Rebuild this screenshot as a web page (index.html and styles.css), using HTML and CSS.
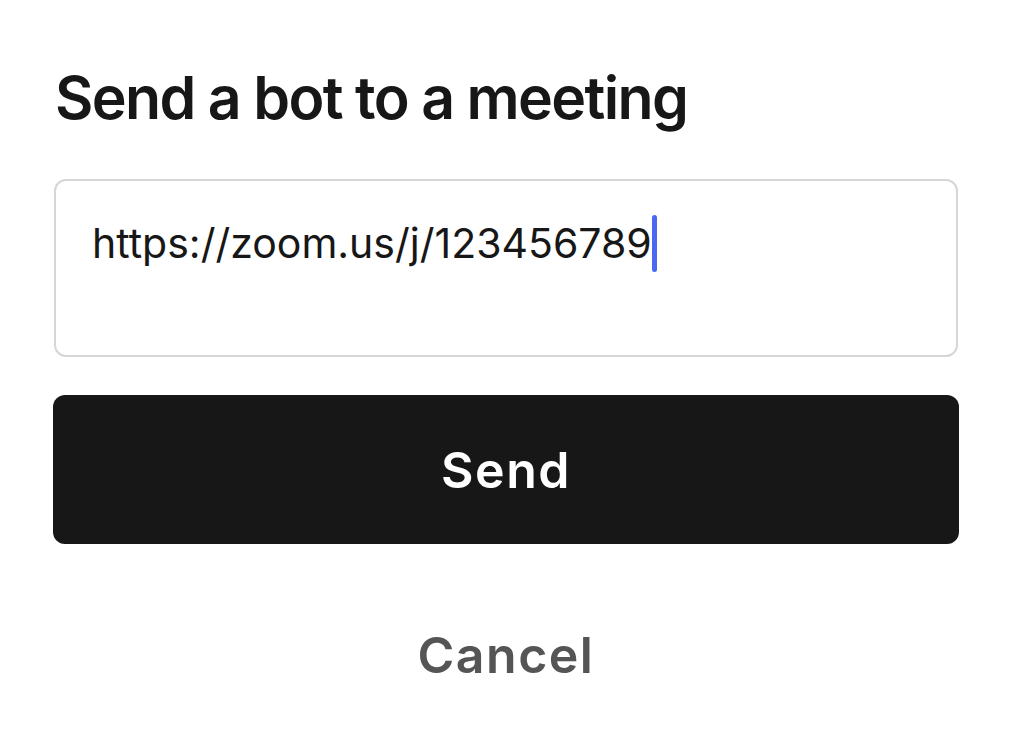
FILE: index.html
```html
<!DOCTYPE html>
<html lang="en">
<head>
<meta charset="utf-8">
<title>Send a bot to a meeting</title>
<link rel="stylesheet" href="styles.css">
</head>
<body>
<main class="sheet">
  <h1 class="title">Send a bot to a meeting</h1>
  <div class="field"><span class="field-text">https://zoom.us/j/123456789</span><span class="caret"></span></div>
  <button class="send" type="button">Send</button>
  <button class="cancel" type="button">Cancel</button>
</main>
</body>
</html>
```
FILE: styles.css
```css
html, body {
  margin: 0;
  padding: 0;
  background: #ffffff;
}
body {
  font-family: Inter, "Noto Sans", "Liberation Sans", sans-serif;
  color: #171717;
}
.sheet {
  display: flex;
  flex-direction: column;
  padding: 62px 52px 0 53px;
}
.title {
  margin: 0 0 0 2px;
  font-size: 59px;
  line-height: 72px;
  font-weight: 600;
  letter-spacing: -1.65px;
  color: #171717;
}
.field {
  margin-top: 45px;
  height: 178px;
  box-sizing: border-box;
  border: 2px solid #d6d6d6;
  border-radius: 12px;
  margin-left: 1px;
  margin-right: 1px;
  padding: 34px 36px 0 36px;
  display: flex;
  align-items: flex-start;
}
.field-text {
  font-size: 41px;
  line-height: 56px;
  font-weight: 400;
  color: #171717;
}
.caret {
  display: inline-block;
  width: 5px;
  height: 57px;
  margin-top: 0;
  border-radius: 3px;
  background: #4a69f0;
}
.send {
  margin-top: 38px;
  height: 149px;
  border: none;
  border-radius: 12px;
  background: #171717;
  color: #ffffff;
  font-family: inherit;
  font-size: 50px;
  font-weight: 600;
  letter-spacing: 1.5px;
}
.cancel {
  margin-top: 81px;
  border: none;
  background: none;
  color: #555555;
  font-family: inherit;
  font-size: 50px;
  line-height: 60px;
  font-weight: 600;
  letter-spacing: 1.5px;
  padding: 0;
}
```
